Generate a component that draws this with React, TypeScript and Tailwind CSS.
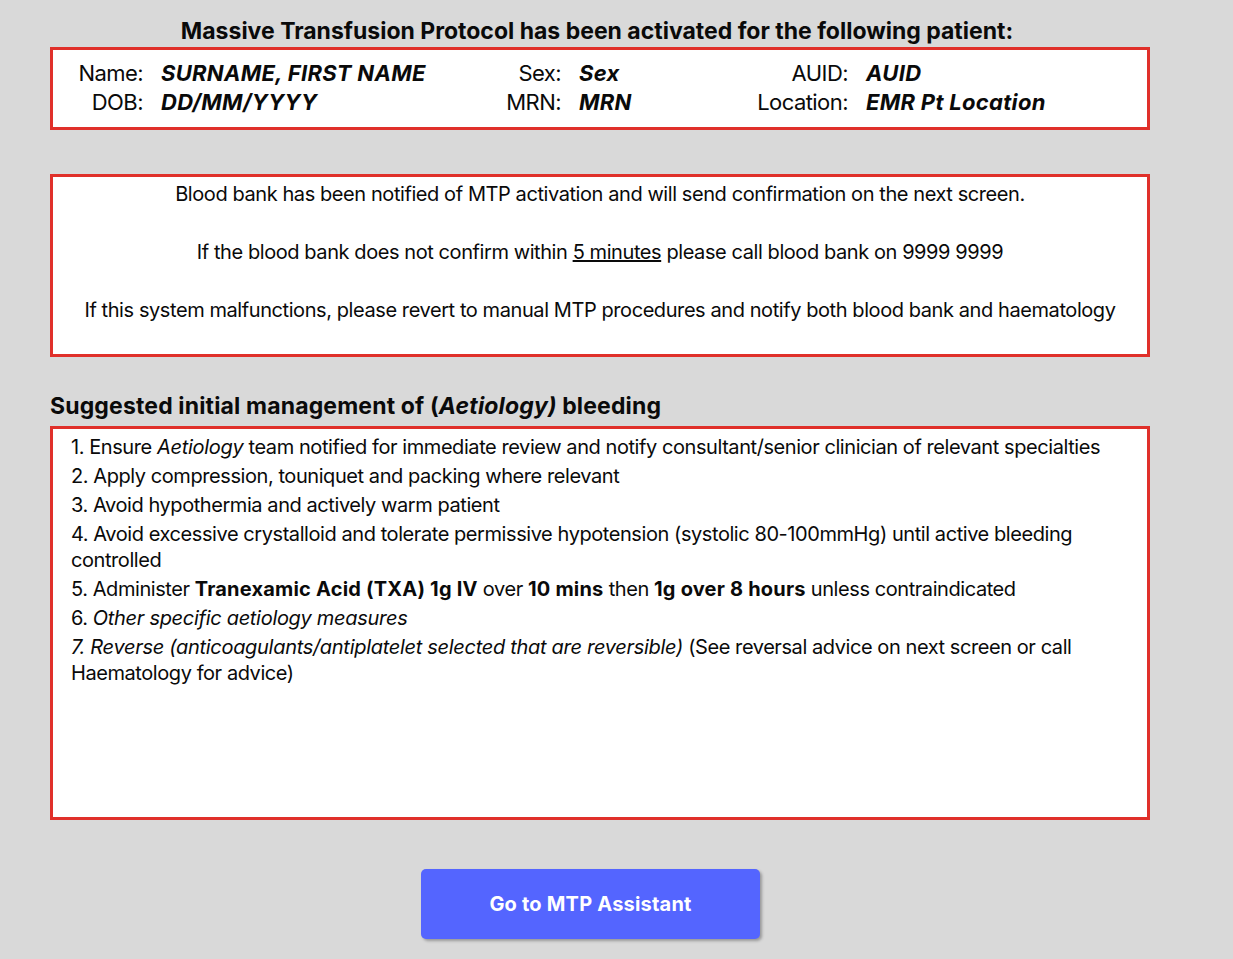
import React from "react";

export default function App() {
  const font = { fontFamily: "Inter, 'Noto Sans', sans-serif" };
  const lab = "text-right tracking-[-0.55px]";
  const val = "font-bold italic tracking-[0.3px]";
  return (
    <div className="min-h-[959px] w-full bg-[#d9d9d9] text-[#0a0a0a] pt-[17px]" style={font}>
      <div className="ml-[50px] w-[1100px]">
        <h1 className="text-center text-[23px] leading-[29px] font-bold h-[30px] pr-[6px]">
          Massive Transfusion Protocol has been activated for the following patient:
        </h1>
        <div className="h-[83px] border-[3px] border-[#e0302a] bg-white pt-[9px]">
          <div className="grid grid-cols-[90px_282px_100px_142px_109px_1fr] gap-x-[18px] text-[22px] leading-[29px]">
            <div className={lab}>Name:</div>
            <div className={val}>SURNAME, FIRST NAME</div>
            <div className={lab}>Sex:</div>
            <div className={val}>Sex</div>
            <div className={lab}>AUID:</div>
            <div className={val}>AUID</div>
            <div className={lab}>DOB:</div>
            <div className={val}>DD/MM/YYYY</div>
            <div className={lab}>MRN:</div>
            <div className={val}>MRN</div>
            <div className={lab}>Location:</div>
            <div className={val}>EMR Pt Location</div>
          </div>
        </div>

        <div className="mt-[44px] h-[183px] border-[3px] border-[#e0302a] bg-white pt-[3px] text-center text-[20px] leading-[29px] tracking-[-0.42px]">
          <p>Blood bank has been notified of MTP activation and will send confirmation on the next screen.</p>
          <p className="mt-[29px]">
            If the blood bank does not confirm within <span className="underline">5 minutes</span> please call blood bank on 9999 9999
          </p>
          <p className="mt-[29px]">
            If this system malfunctions, please revert to manual MTP procedures and notify both blood bank and haematology
          </p>
        </div>

        <h2 className="mt-[35px] text-[23px] leading-[29px] font-bold h-[34px] tracking-[0.15px]">
          Suggested initial management of (<span className="italic">Aetiology)</span> bleeding
        </h2>

        <div className="h-[394px] border-[3px] border-[#e0302a] bg-white pt-[5px] pl-[18px] pr-[18px] text-[20px] leading-[26px] tracking-[-0.43px]">
          <div className="flex flex-col gap-[3px]">
            <p>
              1. Ensure <span className="italic tracking-[-0.3px]">Aetiology</span> team notified for immediate review and notify consultant/senior clinician of relevant specialties
            </p>
            <p>2. Apply compression, touniquet and packing where relevant</p>
            <p>3. Avoid hypothermia and actively warm patient</p>
            <p>4. Avoid excessive crystalloid and tolerate permissive hypotension (systolic 80-100mmHg) until active bleeding controlled</p>
            <p>
              5. Administer <span className="font-bold tracking-[0.2px]">Tranexamic Acid (TXA) 1g IV</span> over{" "}
              <span className="font-bold tracking-[0.2px]">10 mins</span> then{" "}
              <span className="font-bold tracking-[0.2px]">1g over 8 hours</span> unless contraindicated
            </p>
            <p>
              6. <span className="italic tracking-[-0.3px]">Other specific aetiology measures</span>
            </p>
            <p>
              <span className="italic tracking-[-0.3px]">7. Reverse (anticoagulants/antiplatelet selected that are reversible)</span> (See reversal advice on next screen or call Haematology for advice)
            </p>
          </div>
        </div>

        <div className="mt-[49px] ml-[371px]">
          <button className="w-[339px] h-[70px] rounded-[5px] bg-[#5465ff] text-white text-[20px] font-bold tracking-[0.2px] shadow-[2px_2px_3px_rgba(0,0,0,0.3)]">
            Go to MTP Assistant
          </button>
        </div>
      </div>
    </div>
  );
}
